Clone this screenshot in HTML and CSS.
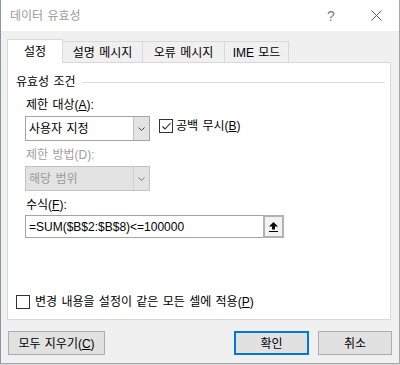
FILE: index.html
```html
<!DOCTYPE html>
<html lang="ko">
<head>
<meta charset="utf-8">
<title>데이터 유효성</title>
<link rel="stylesheet" href="styles.css">
</head>
<body>
<div class="window">
  <div class="titlebar">
    <span class="title">데이터 유효성</span>
    <span class="help">?</span>
    <span class="close">
      <svg width="11" height="11" viewBox="0 0 11 11"><path d="M0.5 0.5 L10.5 10.5 M10.5 0.5 L0.5 10.5" stroke="#5a5a5a" stroke-width="1" fill="none"/></svg>
    </span>
  </div>
  <div class="body">
    <div class="tabs">
      <div class="tab active t1">설정</div>
      <div class="tab t2">설명 메시지</div>
      <div class="tab t3">오류 메시지</div>
      <div class="tab t4">IME 모드</div>
    </div>
    <div class="panel">
      <div class="group-head"><span>유효성 조건</span><span class="rule"></span></div>
      <div class="label l1">제한 대상(<u>A</u>):</div>
      <div class="row">
        <div class="select">
          <span class="select-text">사용자 지정</span>
          <span class="drop"><svg width="7" height="4" viewBox="0 0 7 4"><path d="M0.5 0.5 L3.5 3.5 L6.5 0.5" stroke="#444" fill="none"/></svg></span>
        </div>
        <div class="check inline">
          <span class="box"><svg width="11" height="11" viewBox="0 0 11 11"><path d="M1.5 5.5 L4 8 L9.5 2" stroke="#222" stroke-width="1.1" fill="none"/></svg></span>
          <span>공백 무시(<u>B</u>)</span>
        </div>
      </div>
      <div class="label disabled l2">제한 방법(D):</div>
      <div class="select off">
        <span class="select-text">해당 범위</span>
        <span class="drop"><svg width="7" height="4" viewBox="0 0 7 4"><path d="M0.5 0.5 L3.5 3.5 L6.5 0.5" stroke="#777" fill="none"/></svg></span>
      </div>
      <div class="label l3">수식(<u>F</u>):</div>
      <div class="formula">
        <div class="input">=SUM($B$2:$B$8)&lt;=100000</div>
        <div class="pick">
          <svg width="11" height="12" viewBox="0 0 11 12"><path d="M5.5 1 L10 5.5 L7 5.5 L7 8.5 L4 8.5 L4 5.5 L1 5.5 Z" fill="#000"/><rect x="1" y="10" width="9" height="1" fill="#000"/></svg>
        </div>
      </div>
      <div class="spacer"></div>
      <div class="check apply">
        <span class="box"></span>
        <span>변경 내용을 설정이 같은 모든 셀에 적용(<u>P</u>)</span>
      </div>
    </div>
    <div class="buttons">
      <div class="btn clear">모두 지우기(<u>C</u>)</div>
      <div class="btn ok">확인</div>
      <div class="btn cancel">취소</div>
    </div>
  </div>
</div>
</body>
</html>
```
FILE: styles.css
```css
* { box-sizing: border-box; }
html, body { margin: 0; padding: 0; background: #d6d6d6; }
body {
  font-family: "Liberation Sans", "Noto Sans CJK KR", sans-serif;
  font-size: 12px;
  line-height: 16px;
  word-spacing: 1px;
  color: #000;
}
u { text-decoration: underline; text-underline-offset: 1px; }

.window {
  width: 400px;
  height: 364px;
  background: #f0f0f0;
  border-left: 1px solid #8c96a3;
  border-right: 1px solid #a7a7a7;
  border-bottom: 1px solid #a7a7a7;
  display: flex;
  flex-direction: column;
}

.titlebar {
  height: 31px;
  background: #fff;
  display: flex;
  align-items: center;
  padding-left: 9px;
  flex: none;
}
.title { color: #9a9a9a; flex: 1; }
.help { color: #7a7a7a; font-size: 14px; width: 10px; margin-right: 35px; text-align: center; }
.close { width: 11px; height: 11px; margin-right: 17px; display: flex; }

.body {
  flex: 1;
  display: flex;
  flex-direction: column;
  padding: 8px 7px 0 6px;
}

.tabs {
  display: flex;
  align-items: flex-end;
  flex: none;
}
.tab {
  height: 21px;
  border: 1px solid #d9d9d9;
  border-bottom: none;
  background: #f0f0f0;
  display: flex;
  align-items: center;
  justify-content: center;
  margin-left: -1px;
  padding-top: 1px;
}
.tab.active {
  height: 24px;
  background: #fff;
  margin-left: 0;
  margin-bottom: -1px;
  position: relative;
  z-index: 1;
  padding-top: 1px;
}
.t1 { width: 56px; }
.t2 { width: 81px; }
.t3 { width: 83px; }
.t4 { width: 65px; }

.panel {
  height: 258px;
  margin-right: 1px;
  background: #fff;
  border: 1px solid #d9d9d9;
  display: flex;
  flex-direction: column;
  padding-left: 8px;
  flex: none;
}

.group-head {
  display: flex;
  align-items: center;
  margin-top: 11px;
  margin-right: 5px;
}
.rule { flex: 1; height: 1px; background: #dcdcdc; margin-left: 6px; }

.label { margin-left: 10px; }
.l1 { margin-top: 7px; }
.l2 { margin-top: 6px; }
.l3 { margin-top: 6px; }
.disabled { color: #a0a0a0; }

.row { display: flex; align-items: flex-start; margin-top: 3px; }

.select {
  width: 125px;
  height: 25px;
  margin-left: 9px;
  border: 1px solid #a5a5a5;
  background: #fff;
  display: flex;
  flex: none;
}
.select.off { margin-top: 3px; background: #e3e3e3; border-color: #c3c3c3; color: #9a9a9a; }
.select-text { flex: 1; padding-left: 3px; display: flex; align-items: center; }
.drop {
  width: 16px;
  background: #e3e3e3;
  border-left: 1px solid #c4c4c4;
  display: flex;
  align-items: center;
  justify-content: center;
}
.off .drop { background: #e3e3e3; border-left-color: #cfcfcf; }

.check { display: flex; align-items: center; }
.check.inline { margin-left: 9px; margin-top: 2px; }
.box {
  width: 14px;
  height: 14px;
  border: 1px solid #333;
  background: #fff;
  display: flex;
  align-items: center;
  justify-content: center;
  margin-right: 3px;
  flex: none;
}

.formula { display: flex; margin-left: 9px; margin-top: 2px; }
.input {
  width: 238px;
  height: 23px;
  border: 1px solid #a5a5a5;
  border-right: none;
  padding-left: 3px;
  display: flex;
  align-items: center;
}
.pick {
  width: 21px;
  height: 23px;
  border: 2px solid #b2b2b2;
  background: #f2f2f2;
  display: flex;
  align-items: center;
  justify-content: center;
}

.spacer { flex: 1; }
.apply { margin-left: 0; margin-bottom: 9px; }
.apply .box { margin-right: 5px; }

.buttons {
  display: flex;
  margin-top: 11px;
}
.btn {
  height: 24px;
  background: #e1e1e1;
  border: 1px solid #adadad;
  display: flex;
  align-items: center;
  justify-content: center;
  padding-top: 1px;
}
.clear { width: 97px; margin-left: 1px; }
.ok { width: 75px; margin-left: auto; border: 2px solid #0078d7; }
.cancel { width: 74px; margin-left: 9px; }
```
